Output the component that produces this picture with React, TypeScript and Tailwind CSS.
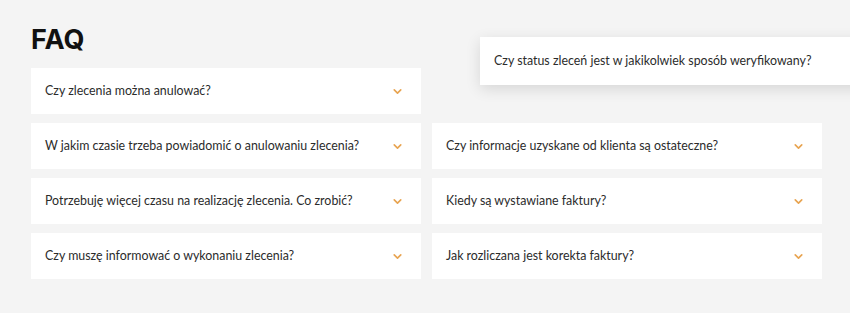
import { ChevronDown } from 'lucide-react';

const LEFT = [
  'Czy zlecenia można anulować?',
  'W jakim czasie trzeba powiadomić o anulowaniu zlecenia?',
  'Potrzebuję więcej czasu na realizację zlecenia. Co zrobić?',
  'Czy muszę informować o wykonaniu zlecenia?',
];

const RIGHT = [
  null,
  'Czy informacje uzyskane od klienta są ostateczne?',
  'Kiedy są wystawiane faktury?',
  'Jak rozliczana jest korekta faktury?',
];

function Item({ text }: { text: string }) {
  return (
    <div className="h-[46px] bg-white flex items-center justify-between pl-[14px] pr-[17px]">
      <span className="text-[12.4px] text-[#2b2b2b] whitespace-nowrap">{text}</span>
      <ChevronDown className="w-[13px] h-[13px] text-[#e8a451]" strokeWidth={3} />
    </div>
  );
}

export default function App() {
  return (
    <div
      className="relative w-[850px] h-[313px] bg-[#f4f4f4] overflow-hidden pl-[31px] pt-[25px]"
      style={{ fontFamily: 'Lato, "Noto Sans", sans-serif' }}
    >
      <h2
        className="text-[27px] font-bold text-[#111] leading-[30px]"
        style={{ fontFamily: 'Inter, sans-serif' }}
      >
        FAQ
      </h2>
      <div className="mt-[13px] grid grid-cols-[390px_390px] gap-x-[11px] gap-y-[9px]">
        {LEFT.map((l, i) => (
          <div key={i} className="contents">
            <Item text={l} />
            {RIGHT[i] ? <Item text={RIGHT[i]!} /> : <div />}
          </div>
        ))}
      </div>
      <div className="absolute left-[480px] top-[37px] w-[390px] h-[48px] bg-white shadow-[0_4px_14px_rgba(0,0,0,0.12)] flex items-center pl-[14px]">
        <span className="text-[12.4px] text-[#2b2b2b] whitespace-nowrap">
          Czy status zleceń jest w jakikolwiek sposób weryfikowany?
        </span>
      </div>
    </div>
  );
}
